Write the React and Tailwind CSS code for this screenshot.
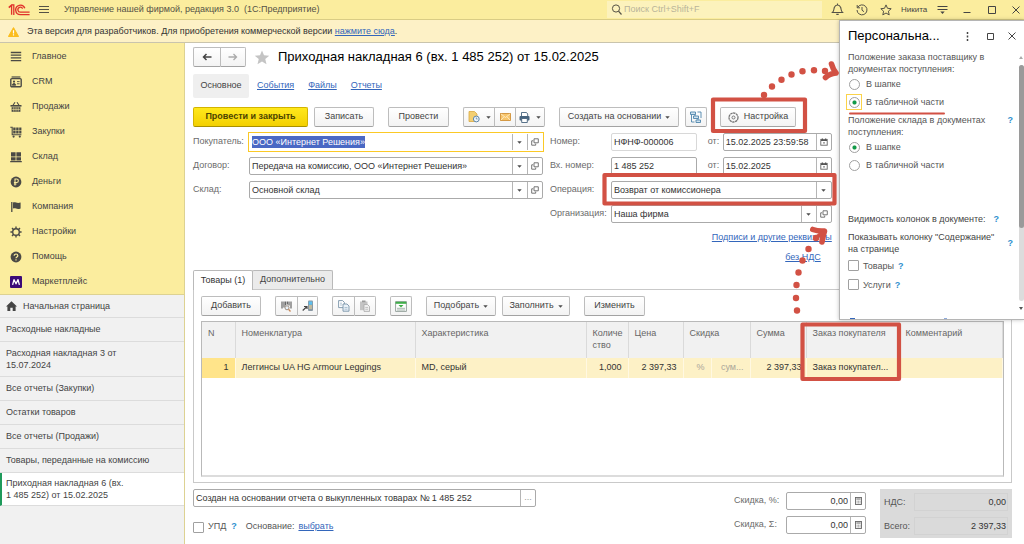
import { useEffect, useRef } from "react";

/* ---------- small icons ---------- */

function Svg({ w = 12, h = w, box = `0 0 ${w} ${h}`, children, className = "" }) {
  return (
    <svg width={w} height={h} viewBox={box} fill="none" aria-hidden="true" className={`shrink-0 ${className}`}>
      {children}
    </svg>
  );
}

const Logo = () => (
  <Svg w={22} h={12}>
    <g stroke="#e0322b" fill="none">
      <path d="M.8 3.2 3.6 1v9.8M5.8 11V.9H4.2L.8 3.8" strokeWidth="1.3" />
      <path d="M16.8 4.2A4.7 4.7 0 1 0 12.4 10.6H21.6" strokeWidth="1.4" />
      <path d="M14.6 4.6A2.5 2.5 0 1 0 12.4 8.2H21.6" strokeWidth="1.3" />
    </g>
  </Svg>
);

const OpenIcon = () => (
  <Svg w={8}>
    <path d="M3 .8h4.3v4H3zM2.2 2.8H.7v4.4h4V5.6" stroke="#666" strokeWidth=".9" />
  </Svg>
);

const CalendarIcon = () => (
  <Svg w={8}>
    <rect x=".8" y="1.4" width="6.4" height="5.8" stroke="#666" strokeWidth=".9" />
    <path d="M1 2.3h6M2.4.4v1.4M5.6.4v1.4" stroke="#555" strokeWidth="1.3" />
    <path d="M3 4.9h2" stroke="#888" strokeWidth="1.3" />
  </Svg>
);

const CalcIcon = () => (
  <Svg w={7} h={8}>
    <rect x=".5" y=".5" width="6" height="7" stroke="#666" strokeWidth=".9" />
    <path d="M1.3 2h4.4" stroke="#666" strokeWidth="1.2" />
    <path d="M1.6 4.2h4M1.6 5.9h4" stroke="#888" strokeWidth="1" strokeDasharray="1 .5" />
  </Svg>
);

const Caret = () => (
  <Svg w={5} h={3}>
    <path d="M.3.2h4.4L2.5 2.8z" fill="#4d4d4d" />
  </Svg>
);

const G = "#4b4a45";
const sectionIcons = {
  list: <path d="M.8 1.5h10.4M.8 4.2h10.4M.8 6.9h10.4M.8 9.6h10.4" stroke={G} strokeWidth="1.3" />,
  crm: (
    <>
      <rect x=".8" y="2.6" width="10.4" height="8.2" rx="1" stroke={G} strokeWidth="1.4" />
      <path d="M1.6 1h8.8" stroke={G} strokeWidth="1.2" />
      <circle cx="4" cy="5.6" r="1.1" fill={G} />
      <path d="M2.3 9.2c0-2.4 3.4-2.4 3.4 0zM7 5.6h2.6M7 7.8h2.6" fill={G} stroke={G} strokeWidth=".9" />
    </>
  ),
  basket: (
    <>
      <path d="M3 4.2 5 1.2M9 4.2 7 1.2" stroke={G} strokeWidth="1.1" />
      <path d="M.5 4h11v1.6H.5z" fill={G} />
      <path d="M1.6 6.2h8.8v4.6H1.6z" fill={G} />
      <path d="M3.8 6.2v4.4M6 6.2v4.4M8.2 6.2v4.4M1.8 8.4h8.4" stroke="#fbed9e" strokeWidth=".6" />
    </>
  ),
  cart: (
    <>
      <path d="M.3 1.2h1.9v7.6h9.2" stroke={G} strokeWidth="1.1" />
      <path d="M3.2 1.4h2.4v2.6H3.2zM6.2 1.4h2.4v2.6H6.2zM9.2 1.4h2.2v2.6H9.2zM3.2 4.6h2.4v2.8H3.2zM6.2 4.6h2.4v2.8H6.2zM9.2 4.6h2.2v2.8H9.2z" fill={G} />
      <circle cx="3.6" cy="10.6" r="1.1" fill={G} />
      <circle cx="9.8" cy="10.6" r="1.1" fill={G} />
    </>
  ),
  store: (
    <path d="M1 1.2h4.6v4.2H1zM6.4 1.2H11v4.2H6.4zM1 6.2h4.6v3.2H1zM6.4 6.2H11v3.2H6.4zM.2 10h11.6v1.2H.2z" fill={G} />
  ),
  money: (
    <>
      <circle cx="6" cy="6" r="5.4" fill={G} />
      <path d="M5 9.4V3h1.6a1.7 1.7 0 0 1 0 3.5H3.9M3.9 8h2.6" stroke="#fbed9e" strokeWidth="1.1" />
    </>
  ),
  flag: (
    <>
      <path d="M1.8 1v10" stroke={G} strokeWidth="1.3" />
      <path d="M3 1.6c2.4-1 3.4 1.2 7.6 0v5.8c-4 1.4-5-.8-7.6.2z" fill={G} />
    </>
  ),
  gear: (
    <>
      <circle cx="6" cy="6" r="3.3" stroke={G} strokeWidth="1.4" />
      <path d="M6 .4v2M6 9.600v2M.4 6h2M9.600 6h2M2 2l1.400 1.400M8.600 8.600 10 10M10 2 8.600 3.400M3.400 8.600 2 10" stroke={G} strokeWidth="1.4" />
    </>
  ),
  help: (
    <>
      <circle cx="6" cy="6" r="5.4" fill={G} />
      <path d="M4.2 4.7c0-2.3 3.6-2.2 3.6 0C7.8 6 6 5.900 6 7.300M6 8.200v1.200" stroke="#fbed9e" strokeWidth="1.200" />
    </>
  ),
  market: (
    <>
      <rect width="12" height="12" rx="1" fill="#3b0a78" />
      <path d="M2.600 8.800 4 3.600l2 4.200 2-4.200 1.400 5.200" stroke="#fff" strokeWidth="1.300" strokeLinejoin="round" />
    </>
  ),
};

/* ---------- shared controls ---------- */

const btn =
  "flex h-5 items-center justify-center rounded-[2px] border border-[#bdbdbd] border-b-[#a3a3a3] bg-linear-to-b from-white to-[#f3f3f3] text-[#444] whitespace-nowrap";

function Button({ className = "", children, ...rest }) {
  return (
    <button type="button" className={`${btn} ${className}`} {...rest}>
      {children}
    </button>
  );
}

function FieldButton({ label, children }) {
  return (
    <button type="button" aria-label={label} className="flex h-full w-[15px] shrink-0 items-center justify-center border-l border-[#b5b5b5]">
      {children}
    </button>
  );
}

function Field({ id, value, buttons, className = "", frame = "rounded-[2px] border-[#aaa]", inputRef, inputClass = "", label }) {
  return (
    <div className={`flex h-[18px] min-w-0 items-center overflow-hidden border bg-white ${frame} ${className}`}>
      <input
        id={id}
        ref={inputRef}
        aria-label={label}
        defaultValue={value}
        className={`min-w-0 flex-1 bg-transparent px-[2px] leading-3 text-[#333] outline-none selection:bg-[#4a68c4] selection:text-white ${inputClass}`}
      />
      {buttons}
    </div>
  );
}

const link = "text-[#3366bb] underline underline-offset-1";

/* ---------- page parts ---------- */

function TitleBar() {
  return (
    <header className="flex h-5 shrink-0 items-center border-b border-[#d9cc84] bg-[#fbed9e] pl-2 text-[#555246]">
      <Logo />
      <button type="button" aria-label="Меню" className="ml-2">
        <Svg w={12}>
          <path d="M1 2.500h10M1 5.500h10M1 8.500h10" stroke="#555246" />
        </Svg>
      </button>
      <h1 className="ml-[14px] flex-1 truncate">Управление нашей фирмой, редакция 3.0&nbsp; (1С:Предприятие)</h1>
      <label className="flex h-[17px] w-[215px] items-center gap-[2px] bg-[#fcf2bc] pl-[4px]">
        <Svg w={11}>
          <circle cx="5" cy="4.500" r="3.600" stroke="#555246" />
          <path d="m7.500 7.200 3 3.300" stroke="#555246" strokeWidth="1.200" />
        </Svg>
        <input aria-label="Поиск" placeholder="Поиск Ctrl+Shift+F" className="min-w-0 flex-1 bg-transparent outline-none placeholder:text-[#b9b49a]" />
      </label>
      <div className="ml-[9px] flex items-center">
        <button type="button" aria-label="Уведомления" className="mr-3">
          <Svg w={13}>
            <path d="M1.500 9.500h10c-1.600-1.500-1.200-3-1.800-5C9 2.700 7.800 2 6.500 2s-2.500.700-3.200 2.500c-.600 2-.200 3.500-1.800 5zM6.500.500V2M5.300 11.400h2.400" stroke="#555246" strokeWidth="1.100" />
          </Svg>
        </button>
        <button type="button" aria-label="История" className="mr-3">
          <Svg w={12}>
            <path d="M1.600 3.500A5 5 0 1 1 1 6M1.200 1v2.800H4M6 3v3.200l2 1.500" stroke="#555246" />
          </Svg>
        </button>
        <button type="button" aria-label="Избранное" className="mr-[9px]">
          <Svg w={12}>
            <path d="m6 .900 1.500 3.400 3.700.400-2.800 2.500.800 3.700L6 9l-3.200 1.900.800-3.700L.800 4.700l3.700-.400z" stroke="#555246" />
          </Svg>
        </button>
        <span className="w-[27px] text-[8px] text-[#444]">Никита</span>
        <button type="button" aria-label="Настройки окна" className="ml-[9px] mr-[15px]">
          <Svg w={11}>
            <path d="M.500 2.500h10M.500 5.500h10" stroke="#444" />
            <path d="M3.300 7.500h4.400L5.500 10z" fill="#444" />
          </Svg>
        </button>
        <button type="button" aria-label="Свернуть" className="mr-[17px]">
          <Svg w={8}>
            <path d="M.500 6.500h7" stroke="#444" />
          </Svg>
        </button>
        <button type="button" aria-label="Развернуть" className="mr-[16px]">
          <Svg w={8}>
            <path d="M.500.500h7v7h-7z" stroke="#444" />
          </Svg>
        </button>
        <button type="button" aria-label="Закрыть" className="mr-[4px]">
          <Svg w={8}>
            <path d="m.500.500 7 7m0-7-7 7" stroke="#444" />
          </Svg>
        </button>
      </div>
    </header>
  );
}

function Warning() {
  return (
    <div className="flex h-[23px] shrink-0 items-center gap-2 border-b border-[#c9c4ad] bg-[#fdf1c6] pl-2 pt-px text-[#333]">
      <Svg w={11} h={10}>
        <path d="M5.500.600 10.600 9.500H.400z" fill="#fbbd1e" stroke="#fbbd1e" strokeLinejoin="round" />
        <path d="M5.500 3.200v3.200M5.500 7.300v1.200" stroke="#fff" strokeWidth="1.200" />
      </Svg>
      <p>
        Эта версия для разработчиков. Для приобретения коммерческой версии{" "}
        <a href="#buy" className={link}>нажмите сюда</a>.
      </p>
    </div>
  );
}

const sections = [
  ["list", "Главное"],
  ["crm", "CRM"],
  ["basket", "Продажи"],
  ["cart", "Закупки"],
  ["store", "Склад"],
  ["money", "Деньги"],
  ["flag", "Компания"],
  ["gear", "Настройки"],
  ["help", "Помощь"],
  ["market", "Маркетплейс"],
];

const openPages = [
  ["Расходные накладные"],
  ["Расходная накладная 3 от", "15.07.2024"],
  ["Все отчеты (Закупки)"],
  ["Остатки товаров"],
  ["Все отчеты (Продажи)"],
  ["Товары, переданные на комиссию"],
];

function Sidebar() {
  return (
    <aside className="flex w-[185px] shrink-0 flex-col border-r border-[#ddd292] bg-[#f1f1f1] text-[#444]">
      <nav className="border-b border-[#ddd292] bg-[#fbed9e] pt-px">
        {sections.map(([icon, name]) => (
          <a key={name} href="#section" className="flex h-[25px] items-center gap-[10px] pl-[10px]">
            <Svg w={12}>{sectionIcons[icon]}</Svg>
            {name}
          </a>
        ))}
      </nav>
      <nav className="leading-3">
        <a href="#page" className="flex h-[23px] items-center gap-[6px] border-b border-[#dcdcdc] pl-[6px]">
          <Svg w={11} h={10}>
            <path d="M5.500.300 0 5.400h1.400V10h2.900V6.700h2.400V10h2.900V5.400H11z" fill="#444" />
          </Svg>
          Начальная страница
        </a>
        {openPages.map((lines) => (
          <a key={lines[0]} href="#page" className="block border-b border-[#dcdcdc] py-[5px] pl-[6px] leading-[13px] data-[two=true]:leading-3" data-two={lines.length > 1}>
            {lines.map((l) => (
              <span key={l} className="block">{l}</span>
            ))}
          </a>
        ))}
        <a href="#page" aria-current="page" className="block border-b border-l-2 border-b-[#dcdcdc] border-l-[#1f9a5b] bg-white py-[4px] pl-1">
          Приходная накладная 6 (вх.
          <br />1 485 252) от 15.02.2025
        </a>
      </nav>
    </aside>
  );
}

function Commands() {
  return (
    <div className="mt-[9px] flex">
      <button type="button" className="mr-[6px] h-5 w-[115px] rounded-[2px] border border-[#d3b400] border-b-[#a89000] bg-linear-to-b from-[#ffe81a] to-[#f3d000] font-bold text-[#4d4400]">
        Провести и закрыть
      </button>
      <Button className="mr-[14px] w-[60px]">Записать</Button>
      <Button className="mr-[14px] w-[61px]">Провести</Button>
      <div className="mr-[14px] flex">
        <Button aria-label="Создать напоминание" className="w-[31px] gap-[6px] rounded-r-none border-r-0">
          <Svg w={12}>
            <path d="M1 .500h5.500L9 3v7.500H1z" fill="#f3cf72" stroke="#d9a941" strokeWidth=".800" />
            <circle cx="8.300" cy="8" r="2.900" fill="#eef5fb" stroke="#5f86a8" />
            <path d="M8.300 6.400V8h1.300" stroke="#5f86a8" strokeWidth=".800" />
          </Svg>
          <Caret />
        </Button>
        <Button aria-label="Отправить письмо" className="w-[21px] rounded-none border-r-0">
          <Svg w={11} h={8}>
            <rect x=".500" y=".500" width="10" height="7" fill="#f7c56b" stroke="#d0923a" strokeWidth=".900" />
            <path d="m.800.800 4.700 3.700L10.200.800M.800 7.200 4 3.800M10.200 7.200 7 3.800" stroke="#fff3d6" strokeWidth=".800" />
          </Svg>
        </Button>
        <Button aria-label="Печать" className="w-[30px] gap-[6px] rounded-l-none">
          <Svg w={11}>
            <path d="M2.500.500h5L8.700 2v2.500H2.500z" fill="#fff" stroke="#46637e" strokeWidth=".900" />
            <rect x=".500" y="4" width="10" height="4.500" rx="1" fill="#46637e" />
            <path d="M2.700 6.500h5.600v4H2.700z" fill="#fff" stroke="#46637e" strokeWidth=".900" />
          </Svg>
          <Caret />
        </Button>
      </div>
      <Button className="mr-[6px] w-[120px] gap-1">
        Создать на основании <Caret />
      </Button>
      <Button aria-label="Структура подчиненности" className="mr-[13px] w-[22px]">
        <Svg w={12}>
          <path d="M.500 1h5v2.500h-5zM3.500 5h5v2.500h-5zM6 9h4.500v2.500H6z" fill="#cfe2ef" stroke="#4f86ad" strokeWidth=".900" />
          <path d="M7.500 1H11v6M1.500 3.500V11h3M5 3.500V5M8 7.500V9" stroke="#4f86ad" strokeWidth=".900" />
        </Svg>
      </Button>
      <Button className="w-[76px] gap-[5px]">
        <Svg w={11}>
          <circle cx="5.500" cy="5.500" r="4.500" stroke="#777" strokeWidth="1.300" strokeDasharray="2.400 .500" />
          <circle cx="5.500" cy="5.500" r="1.500" stroke="#777" />
        </Svg>
        Настройка
      </Button>
    </div>
  );
}

const selectButtons = (
  <>
    <FieldButton label="Выбрать"><Caret /></FieldButton>
    <FieldButton label="Открыть"><OpenIcon /></FieldButton>
  </>
);
const calendarButton = (
  <FieldButton label="Календарь"><CalendarIcon /></FieldButton>
);

function Form() {
  const buyer = useRef(null);
  useEffect(() => {
    buyer.current.focus({ preventScroll: true });
    buyer.current.select();
  }, []);
  const label = "text-[#6b6b6b] whitespace-nowrap";
  return (
    <div className="mt-[6px] w-[78%]">
      <div className="grid grid-cols-[350fr_282fr] items-start gap-x-[7px]">
        <div className="grid grid-cols-[56px_minmax(0,1fr)] items-center gap-y-[6px]">
          <label htmlFor="buyer" className={label}>Покупатель:</label>
          <Field id="buyer" inputRef={buyer} value="ООО «Интернет Решения»" frame="border-white outline-1 outline-[#fbc926]" buttons={selectButtons} />
          <label htmlFor="contract" className={label}>Договор:</label>
          <Field id="contract" value="Передача на комиссию, ООО «Интернет Решения»" buttons={selectButtons} />
          <label htmlFor="store" className={label}>Склад:</label>
          <Field id="store" value="Основной склад" buttons={selectButtons} />
        </div>
        <div className="grid grid-cols-[61px_minmax(0,1fr)] items-center gap-y-[6px]">
          <label htmlFor="number" className={label}>Номер:</label>
          <div className="flex items-center">
            <Field id="number" value="НФНФ-000006" className="flex-1" frame="rounded-[2px] border-[#d8d8d8]" />
            <label htmlFor="date" className={`w-[26px] pl-[11px] ${label}`}>от:</label>
            <Field id="date" value="15.02.2025 23:59:58" className="w-[109px]" buttons={calendarButton} />
          </div>
          <label htmlFor="innumber" className={label}>Вх. номер:</label>
          <div className="flex items-center">
            <Field id="innumber" value="1 485 252" className="flex-1" />
            <label htmlFor="indate" className={`w-[26px] pl-[11px] ${label}`}>от:</label>
            <Field id="indate" value="15.02.2025" className="w-[109px]" buttons={calendarButton} />
          </div>
          <label htmlFor="operation" className={label}>Операция:</label>
          <div className="relative flex h-[18px] rounded-[2px] border border-[#aaa] bg-white">
            <select id="operation" className="w-full appearance-none bg-transparent pl-[2px] pt-px text-[#333] outline-none">
              <option>Возврат от комиссионера</option>
            </select>
            <span className="pointer-events-none absolute inset-y-0 right-0 flex w-[15px] items-center justify-center border-l border-[#b5b5b5]">
              <Caret />
            </span>
          </div>
          <label htmlFor="org" className={label}>Организация:</label>
          <Field id="org" value="Наша фирма" buttons={selectButtons} />
        </div>
      </div>
      <div className="mt-[7px] flex flex-col items-end gap-[6px] leading-[14px]">
        <a href="#signatures" className={link}>Подписи и другие реквизиты</a>
        <a href="#vat" className={`mr-[11px] ${link}`}>без НДС</a>
      </div>
    </div>
  );
}

function GoodsToolbar() {
  return (
    <div className="flex">
      <Button className="mr-[14px] w-[60px]">Добавить</Button>
      <Button aria-label="Поиск по штрихкоду" className="w-[22px] rounded-r-none border-r-0">
        <Svg w={11}>
          <path d="M1 .500v7M3 .500v6M4.700.500v4M6.300.500v3M8 .500v4M10 .500v7" stroke="#444" />
          <circle cx="6" cy="6.800" r="2" fill="#e8f2fa" stroke="#8a7a6a" strokeWidth=".800" />
          <path d="m7.500 8.300 2 2.200" stroke="#c98a5a" strokeWidth="1.300" />
        </Svg>
      </Button>
      <Button aria-label="Терминал сбора данных" className="mr-[14px] w-[21px] rounded-l-none">
        <Svg w={12}>
          <rect x="6" y=".500" width="5" height="10.500" rx="1" fill="#8a98a3" />
          <path d="M6.800 1.500h3.400v3.200H6.800z" fill="#5cc0f0" />
          <path d="M7 6h3M7 8h3" stroke="#f3dc9a" />
          <path d="M.700 10.500 4.500 7M2 6.500h3V9" stroke="#444" strokeWidth="1.200" />
        </Svg>
      </Button>
      <Button aria-label="Копировать" className="w-[22px] rounded-r-none border-r-0">
        <Svg w={12}>
          <path d="M.600.600h4L6.400 2.400v5.200H.600z" fill="#fff" stroke="#7893a8" strokeWidth=".900" />
          <path d="M5 4h4l2 2v5.200H5z" fill="#eaf2f8" stroke="#7893a8" strokeWidth=".900" />
          <path d="M6.500 7.500h3M6.500 9.200h3M2 3.200h2M2 5h2" stroke="#9fb8ca" strokeWidth=".800" />
        </Svg>
      </Button>
      <Button aria-label="Вставить" disabled className="mr-[14px] w-[22px] rounded-l-none">
        <Svg w={12}>
          <path d="M1 1.500h7.500v8.700H1z" fill="#c4c4c4" />
          <path d="M3 .500h3.500v1.700H3z" fill="#9b9b9b" />
          <path d="M5 4.500h3.500l2 2v4.900H5z" fill="#eee" stroke="#a9a9a9" strokeWidth=".800" />
          <path d="M6.300 7.500h2.700M6.300 9.300h2.700" stroke="#b9b9b9" strokeWidth=".800" />
        </Svg>
      </Button>
      <Button aria-label="Загрузить из таблицы" className="mr-[14px] w-[22px]">
        <Svg w={12} h={11}>
          <path d="M.600.600h10.800v9.800H.600z" fill="#fff" stroke="#7d8d86" strokeWidth=".800" />
          <path d="M.600.800h10.800v2H.600z" fill="#3fae49" />
          <path d="M3.500 4h5L6 6.600z" fill="#3fae49" />
          <path d="M2 7.300h8M2 9h8" stroke="#8fa39a" strokeWidth=".800" />
        </Svg>
      </Button>
      <Button className="mr-[6px] w-[70px] gap-1">Подобрать <Caret /></Button>
      <Button className="mr-[14px] w-[68px] gap-1">Заполнить <Caret /></Button>
      <Button className="w-[61px]">Изменить</Button>
    </div>
  );
}

function GoodsTable() {
  const th = "h-[36px] border-r border-[#dadada] px-[6px] pt-[5px] text-left align-top font-normal leading-3";
  const td = "h-[20px] border-r border-[#fff8e2] px-[6px] truncate";
  return (
    <div className="mt-[5px] h-[156px] border border-b-2 border-[#b9b9b9] border-b-[#dcdcdc]">
      <table className="w-full table-fixed border-collapse">
        <colgroup>
          <col className="w-[33px]" />
          <col className="w-[180px]" />
          <col className="w-[171px]" />
          <col className="w-[42px]" />
          <col className="w-[55px]" />
          <col className="w-[28px]" />
          <col className="w-[39px]" />
          <col className="w-[56px]" />
          <col className="w-[93px]" />
          <col />
        </colgroup>
        <thead className="bg-[#f1f1f1] text-[#666]">
          <tr>
            <th className={th}>N</th>
            <th className={th}>Номенклатура</th>
            <th className={th}>Характеристика</th>
            <th className={th}>Количе<br />ство</th>
            <th className={th}>Цена</th>
            <th className={th} colSpan={2}>Скидка</th>
            <th className={th}>Сумма</th>
            <th className={th}>Заказ покупателя</th>
            <th className={th}>Комментарий</th>
          </tr>
        </thead>
        <tbody className="bg-[#fdf1c6] text-[#333]">
          <tr>
            <td className={`${td} bg-[#ffe48a] text-right`}>1</td>
            <td className={td}>Леггинсы UA HG Armour Leggings</td>
            <td className={td}>MD, серый</td>
            <td className={`${td} text-right`}>1,000</td>
            <td className={`${td} text-right`}>2 397,33</td>
            <td className={`${td} text-right text-[#aaa69a]`}>%</td>
            <td className={`${td} text-right text-[#aaa69a]`}>сум...</td>
            <td className="whitespace-nowrap border-r border-[#fff8e2] pr-1 text-right">2 397,33</td>
            <td className={td}>Заказ покупател...</td>
            <td className={td}></td>
          </tr>
        </tbody>
      </table>
    </div>
  );
}

function Footer() {
  const calc = (
    <FieldButton label="Калькулятор"><CalcIcon /></FieldButton>
  );
  return (
    <footer className="mt-[6px] flex items-start">
      <div className="w-[343px]">
        <Field label="Комментарий" value="Создан на основании отчета о выкупленных товарах № 1 485 252" buttons={
          <FieldButton label="Редактировать комментарий"><span className="text-[#999]">...</span></FieldButton>
        } />
        <div className="mt-3 flex h-4 items-center text-[#555]">
          <input id="upd" type="checkbox" className="size-[11px] appearance-none rounded-[1px] border border-[#a0a0a0] bg-white" />
          <label htmlFor="upd" className="ml-1">УПД</label>
          <button type="button" aria-label="Справка" className="ml-[5px] font-bold text-[#2f8fce]">?</button>
          <span className="ml-[9px] mr-1">Основание:</span>
          <a href="#basis" className={link}>выбрать</a>
        </div>
      </div>
      <div className="ml-auto mt-[3px] grid grid-cols-[52px_80px] items-center gap-y-[6px] text-[#6b6b6b]">
        <label htmlFor="dp">Скидка, %:</label>
        <Field id="dp" value="0,00" inputClass="text-right" buttons={calc} />
        <label htmlFor="ds">Скидка, Σ:</label>
        <Field id="ds" value="0,00" inputClass="text-right" buttons={calc} />
      </div>
      <dl className="ml-[14px] grid h-[49px] w-[132px] grid-cols-[1fr_auto] content-center gap-y-[6px] bg-[#dadada] px-1 leading-[18px] text-[#555]">
        <dt>НДС:</dt>
        <dd className="w-[94px] border border-[#d2d2d2] pr-px text-right leading-4 text-[#333]">0,00</dd>
        <dt>Всего:</dt>
        <dd className="w-[94px] border border-[#d2d2d2] pr-px text-right leading-4 text-[#333]">2 397,33</dd>
      </dl>
    </footer>
  );
}

function Radio({ name, children, checked, focused }) {
  return (
    <label className="flex h-[18px] items-center gap-1">
      <span className={`-ml-[2px] flex size-4 items-center justify-center border ${focused ? "border-[#fbd34a]" : "border-transparent"}`}>
        <input
          type="radio"
          name={name}
          defaultChecked={checked}
          className="size-[11px] appearance-none rounded-full border border-[#a0a0a0] bg-white checked:bg-radial checked:from-[#0f9a4a] checked:from-25% checked:to-white checked:to-40%"
        />
      </span>
      {children}
    </label>
  );
}

const Help = () => (
  <button type="button" aria-label="Справка" className="font-bold text-[#2f8fce]">?</button>
);

function SettingsPanel() {
  return (
    <section className="absolute right-0 top-5 flex h-[300px] w-[185px] flex-col overflow-hidden border border-r-0 border-[#b5b5b5] bg-white text-[#555] shadow-[0_0_4px_rgba(0,0,0,0.25)]">
      <header className="flex h-[30px] shrink-0 items-center pl-2">
        <h2 className="flex-1 text-[13px] text-black">Персональна...</h2>
        <button type="button" aria-label="Еще" className="mr-[18px]">
          <Svg w={3} h={9}>
            <path d="M1.500 0v2M1.500 3.500v2M1.500 7v2" stroke="#444" strokeWidth="1.500" />
          </Svg>
        </button>
        <button type="button" aria-label="Развернуть панель" className="mr-[14px]">
          <Svg w={7}>
            <path d="M.500.500h6v6h-6z" stroke="#444" />
          </Svg>
        </button>
        <button type="button" aria-label="Закрыть панель" className="mr-2">
          <Svg w={8}>
            <path d="m.500.500 7 7m0-7-7 7" stroke="#444" />
          </Svg>
        </button>
      </header>
      <div className="flex min-h-0 flex-1">
        <div className="min-w-0 flex-1 pl-2 leading-3">
          <fieldset>
            <legend>Положение заказа поставщику в<br />документах поступления:</legend>
            <Radio name="order">В шапке</Radio>
            <Radio name="order" checked focused>В табличной части</Radio>
          </fieldset>
          <fieldset className="mt-[3px]">
            <legend className="flex w-full items-start justify-between pr-[5px]">
              <span>Положение склада в документах<br />поступления:</span>
              <Help />
            </legend>
            <Radio name="stock" checked>В шапке</Radio>
            <Radio name="stock">В табличной части</Radio>
          </fieldset>
          <p className="mt-[39px] flex gap-2 whitespace-nowrap text-[#444]">Видимость колонок в документе: <Help /></p>
          <div className="mt-[6px] flex items-center justify-between whitespace-nowrap pr-[5px] text-[#444]">
            <span>Показывать колонку "Содержание"<br />на странице</span>
            <Help />
          </div>
          <div className="mt-px">
            {["Товары", "Услуги"].map((t) => (
              <div key={t} className="flex h-[19px] items-center gap-1">
                <label className="flex items-center gap-1">
                  <input type="checkbox" className="size-[11px] appearance-none rounded-[1px] border border-[#a0a0a0] bg-white" />
                  {t}
                </label>
                <Help />
              </div>
            ))}
          </div>
          <a href="#more" aria-label="Дополнительно" className="mt-[23px] block">
            <Svg w={100} h={2}>
              <path d="M2 1.500h5" stroke="#3366bb" />
              <path d="M96 1.500h3" stroke="#8fabdc" />
            </Svg>
          </a>
        </div>
        <div className="flex w-[6px] shrink-0 flex-col items-center pt-[5px]">
          <Svg w={4} h={3}><path d="M0 3h4L2 0z" fill="#aaa" /></Svg>
          <div className="mt-[6px] h-[236px] w-[5px] rounded-full bg-[#dcdcdc]">
            <div className="h-[163px] rounded-full bg-[#9a9a9a]" />
          </div>
          <Svg w={4} h={3} className="mt-[6px]"><path d="M0 0h4L2 3z" fill="#555" /></Svg>
        </div>
      </div>
    </section>
  );
}

function Annotations() {
  const dots = [
    [764, 95], [772, 86.5], [781.5, 79.8], [791.5, 74.5], [802.5, 71.3], [814, 70.3], [825, 71],
    [797, 310.5], [796, 298], [796.5, 285], [798.5, 272.5], [802.5, 260.5], [808.5, 249], [816, 238],
  ];
  return (
    <svg width="1024" height="544" viewBox="0 0 1024 544" fill="none" aria-hidden="true" className="pointer-events-none absolute left-0 top-0">
      <g stroke="#d25144" strokeLinejoin="round" strokeLinecap="round">
        <rect x="713" y="99.500" width="92" height="31.500" strokeWidth="4.200" />
        <rect x="604.500" y="175" width="230" height="28.500" strokeWidth="4.200" />
        <rect x="802.500" y="324.500" width="96.500" height="54.500" strokeWidth="4.200" />
        <path d="M831.500 64c1 3.500 2.500 6.500 4.500 9-3.500.300-7.500 1.500-10.500 4.500" strokeWidth="5.600" />
        <path d="M812.800 229.500c4 1.500 9 1.800 11.700 1.500-1 3-1.800 7-2.500 11" strokeWidth="5.600" />
        <path d="M850 113.500h94" strokeWidth="2" />
        <path d="M817 237l5-4" strokeWidth="4" />
      </g>
      {dots.map(([x, y]) => (
        <circle key={`${x}-${y}`} cx={x} cy={y} r="3.2" fill="#d25144" />
      ))}
    </svg>
  );
}

export default function App() {
  return (
    <div className="relative flex min-h-screen flex-col overflow-hidden bg-white font-['Liberation_Sans',Arial,sans-serif] text-[9px]">
      <TitleBar />
      <Warning />
      <div className="flex flex-1">
        <Sidebar />
        <main className="min-w-0 flex-1 pl-2 pr-3 pt-[5px]">
          <div className="flex h-[18px] items-center">
            <div className="flex">
              <Button aria-label="Назад" className="w-[27px] rounded-r-none border-r-0">
                <Svg w={10} h={8}><path d="M9.500 4H1.500M4.500 1l-3 3 3 3" stroke="#444" strokeWidth="1.500" /></Svg>
              </Button>
              <Button aria-label="Вперед" className="w-[26px] rounded-l-none">
                <Svg w={10} h={8}><path d="M.500 4h8M5.500 1l3 3-3 3" stroke="#aaa" strokeWidth="1.300" /></Svg>
              </Button>
            </div>
            <button type="button" aria-label="В избранное" className="ml-2">
              <Svg w={16} h={15} box="0 0 12 12">
                <path d="m6 .300 1.600 3.900 4.200.300-3.200 2.700 1 4.100L6 9.100l-3.600 2.200 1-4.100L.200 4.500l4.200-.300z" fill="#c4c4c4" />
              </Svg>
            </button>
            <h2 className="ml-2 whitespace-nowrap text-[13px] text-black">Приходная накладная 6 (вх. 1 485 252) от 15.02.2025</h2>
          </div>
          <nav className="mt-2 flex h-6 items-center text-[#444]">
            <a href="#main" aria-current="page" className="mr-2 flex h-6 w-14 items-center justify-center rounded-[2px] bg-[#efefef]">Основное</a>
            <a href="#events" className={`mr-[14px] ${link}`}>События</a>
            <a href="#files" className={`mr-[14px] ${link}`}>Файлы</a>
            <a href="#reports" className={link}>Отчеты</a>
          </nav>
          <Commands />
          <Form />
          <div className="mt-[6px]" role="tablist">
            <div className="flex">
              <button type="button" role="tab" aria-selected="true" className="relative z-10 -mb-px h-5 w-[60px] rounded-t-[2px] border border-b-0 border-[#b9b9b9] bg-white text-[#333]">Товары (1)</button>
              <button type="button" role="tab" aria-selected="false" className="-ml-px h-[19px] w-[81px] rounded-t-[2px] border border-b-0 border-[#b9b9b9] bg-[#ebebeb] text-[#444]">Дополнительно</button>
            </div>
          </div>
          <div className="border border-[#c9c9c9] px-[7px] pb-[5px] pt-[6px]" role="tabpanel">
            <GoodsToolbar />
            <GoodsTable />
          </div>
          <Footer />
        </main>
      </div>
      <SettingsPanel />
      <Annotations />
    </div>
  );
}
